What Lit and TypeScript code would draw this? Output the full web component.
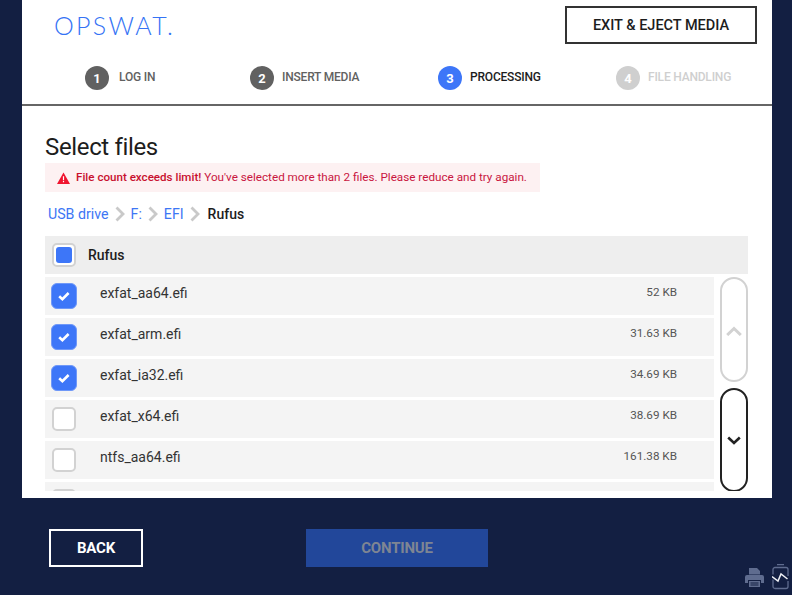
import { LitElement, html, css, svg } from "lit";
import { customElement } from "lit/decorators.js";

const files = [
  { name: "exfat_aa64.efi", size: "52 KB", on: true },
  { name: "exfat_arm.efi", size: "31.63 KB", on: true },
  { name: "exfat_ia32.efi", size: "34.69 KB", on: true },
  { name: "exfat_x64.efi", size: "38.69 KB", on: false },
  { name: "ntfs_aa64.efi", size: "161.38 KB", on: false },
  { name: "", size: "", on: false },
];
const steps = [
  { n: 1, label: "LOG IN", cls: "done" },
  { n: 2, label: "INSERT MEDIA", cls: "done" },
  { n: 3, label: "PROCESSING", cls: "active" },
  { n: 4, label: "FILE HANDLING", cls: "todo" },
];
const crumbSep = svg`<svg class="sep" width="12" height="16" viewBox="0 0 12 16"><path d="M2.500 1.500l6.500 6.500-6.500 6.500" fill="none" stroke="#c9c9c9" stroke-width="2.800"/></svg>`;

@customElement("app-root")
export class AppRoot extends LitElement {
  static styles = css`
    :host { display: block; width: 792px; height: 595px; background: #131f42; font-family: Roboto, "Liberation Sans", sans-serif; overflow: hidden; }
    .card { width: 750px; height: 498px; margin-left: 22px; background: #fff; display: flex; flex-direction: column; overflow: hidden; }
    .top { height: 104px; border-bottom: 2px solid #666; flex: none; }
    .brand { display: flex; justify-content: space-between; padding: 6px 15px 0 32px; height: 38px; }
    .logo { font-family: Lato, sans-serif; font-weight: 300; font-size: 25px; letter-spacing: 2.3px; color: #3573f5; line-height: 38px; }
    .exit { width: 192px; height: 38px; box-sizing: border-box; border: 2px solid #333; display: flex; align-items: center; justify-content: center; font-size: 14.5px; font-weight: 500; color: #1d1d1d; }
    .steps { display: grid; grid-template-columns: 63px 165px 188px 178px auto; margin-top: 22px; }
    .step { display: flex; align-items: center; gap: 8px; font-size: 12px; font-weight: 500; height: 24px; letter-spacing: -.2px; }
    .step:first-child { grid-column: 2; }
    .num { width: 24px; height: 24px; border-radius: 50%; display: flex; align-items: center; justify-content: center; color: #fff; font-weight: 700; font-size: 13px; margin-right: 1px; }
    .step:first-child .num { margin-right: 2px; }
    .step:nth-child(2) .num, .step:nth-child(3) .num, .step:nth-child(4) .num { margin-right: 0; }
    .step span:last-child { position: relative; top: -1px; }
    .done .num { background: #616161; } .done { color: #616161; }
    .active .num { background: #3d76f8; } .active { color: #1d1d1d; }
    .todo .num { background: #cfcfcf; } .todo { color: #cfcfcf; }
    .body { padding: 26px 24px 0 23px; flex: 1; min-height: 0; display: flex; flex-direction: column; }
    h1 { margin: 0; font-size: 24px; font-weight: 400; color: #1d1d1d; line-height: 30px; letter-spacing: -.35px; }
    .alert { width: 495px; height: 29px; margin-top: 1px; background: #fdf1f2; display: flex; align-items: center; gap: 6px; padding-left: 12px; box-sizing: border-box; font-size: 11.7px; color: #c9163f; white-space: nowrap; }
    .alert span { position: relative; top: -1px; }
    .alert b { font-size: 11.6px; font-weight: 500; color: #c8102e; }
    .crumbs { display: flex; align-items: center; height: 20px; margin-top: 12px; padding-left: 3px; font-size: 14.2px; color: #3d76f5; gap: 5px; }
    .crumbs .cur { color: #1d1d1d; font-weight: 500; font-size: 14px; margin-left: 2px; }
    .sep { flex: none; }
    .head { height: 38px; margin-top: 12px; background: #eee; display: flex; align-items: center; padding-left: 7px; flex: none; font-size: 14px; font-weight: 500; color: #1d1d1d; gap: 12px; }
    .box { width: 24px; height: 24px; box-sizing: border-box; border-radius: 5px; border: 2px solid #d2d2d2; background: #fff; display: flex; align-items: center; justify-content: center; flex: none; }
    .box i { display: block; width: 16px; height: 16px; border-radius: 3px; background: #3d76f8; }
    .box.on { background: #3d76f8; border: 1px solid #6f98f8; width: 26px; height: 26px; border-radius: 6px; margin: 0 -1px; }
    .main { display: flex; gap: 6px; margin-top: 3px; overflow: hidden; height: 214px; flex: none; }
    .list { width: 669px; flex: none; display: flex; flex-direction: column; gap: 3px; overflow: hidden; }
    .row { height: 38px; flex: none; background: #f4f4f4; display: flex; align-items: center; padding-left: 7px; }
    .row .name { margin-left: 24px; font-size: 14px; color: #333; position: relative; top: -3px; }
    .row .size { margin-left: auto; padding-right: 37px; font-size: 11.7px; color: #555; position: relative; top: -4px; }
    .scroll { width: 28px; flex: none; display: flex; flex-direction: column; gap: 6px; }
    .sb { width: 28px; height: 105px; box-sizing: border-box; border-radius: 14px; border: 2px solid #d2d2d2; background: #fff; display: flex; align-items: center; justify-content: center; flex: none; }
    .sb svg { margin-top: 2px; }
    .sb.dark { border-color: #222; height: 104px; }
    .sb.dark svg { margin-top: 0; }
    .foot { display: flex; align-items: center; padding: 31px 0 0 49px; position: relative; }
    .back { width: 94px; height: 38px; box-sizing: border-box; border: 2px solid #fff; color: #fff; display: flex; align-items: center; justify-content: center; font-size: 15px; font-weight: 700; letter-spacing: -.2px; }
    .cont { width: 182px; height: 38px; margin-left: 163px; background: #22479a; color: #7e8593; display: flex; align-items: center; justify-content: center; font-size: 15px; font-weight: 700; letter-spacing: -.2px; }
    .tray { position: absolute; right: 3px; top: 66px; display: flex; align-items: center; gap: 8px; }
  `;

  render() {
    return html`
      <div class="card">
        <div class="top">
          <div class="brand">
            <div class="logo">OPSWAT.</div>
            <div class="exit">EXIT &amp; EJECT MEDIA</div>
          </div>
          <div class="steps">
            ${steps.map((s) => html`<div class="step ${s.cls}"><span class="num">${s.n}</span><span>${s.label}</span></div>`)}
          </div>
        </div>
        <div class="body">
          <h1>Select files</h1>
          <div class="alert">
            <svg width="13" height="12" viewBox="0 0 13 12"><path d="M6.500 0.500L13 12H0z" fill="#f0142f"/><path d="M5.900 4.200h1.200v4H5.900zM5.900 9h1.200v1.300H5.900z" fill="#fff"/></svg>
            <span><b>File count exceeds limit!</b> You've selected more than 2 files. Please reduce and try again.</span>
          </div>
          <div class="crumbs">
            <span>USB drive</span>${crumbSep}<span>F:</span>${crumbSep}<span>EFI</span>${crumbSep}<span class="cur">Rufus</span>
          </div>
          <div class="head"><span class="box"><i></i></span><span>Rufus</span></div>
          <div class="main">
            <div class="list">
              ${files.map((f) => html`
                <div class="row">
                  <span class="box ${f.on ? "on" : ""}">
                    ${f.on ? svg`<svg width="14" height="12" viewBox="0 0 14 12"><path d="M2.200 6.200l3.200 3L11.600 3" fill="none" stroke="#fff" stroke-width="2.600"/></svg>` : ""}
                  </span>
                  <span class="name">${f.name}</span>
                  <span class="size">${f.size}</span>
                </div>`)}
            </div>
            <div class="scroll">
              <div class="sb"><svg width="16" height="10" viewBox="0 0 16 10"><path d="M1.200 9L8 2.500 14.800 9" fill="none" stroke="#d2d2d2" stroke-width="3"/></svg></div>
              <div class="sb dark"><svg width="14" height="9" viewBox="0 0 14 9"><path d="M1.200 1.500L7 7l5.800-5.500" fill="none" stroke="#222" stroke-width="2.600"/></svg></div>
            </div>
          </div>
        </div>
      </div>
      <div class="foot">
        <div class="back">BACK</div>
        <div class="cont">CONTINUE</div>
        <div class="tray">
          <svg width="19" height="19" viewBox="0 0 19 19"><path d="M4 0h8l3 3v3.500H4zM0 9a2 2 0 012-2h15a2 2 0 012 2v6h-3v-3H3v3H0zM4 13h11v6H4z" fill="#5f6c8f"/><path d="M5.500 15h8M5.500 17h8" stroke="#131f42" stroke-width="1"/></svg>
          <svg width="17" height="26" viewBox="0 0 17 26"><path d="M5 .7h7M1 10.500V5.500a2 2 0 012-2h11a2 2 0 012 2v6.500M16 17v5.500a2 2 0 01-2 2H3a2 2 0 01-2-2V15.500" fill="none" stroke="#5f6c8f" stroke-width="1.300"/><path d="M0 12.500l6 4.500 3-7 6.500 5" fill="none" stroke="#eef0f5" stroke-width="1.500"/></svg>
        </div>
      </div>
    `;
  }
}
